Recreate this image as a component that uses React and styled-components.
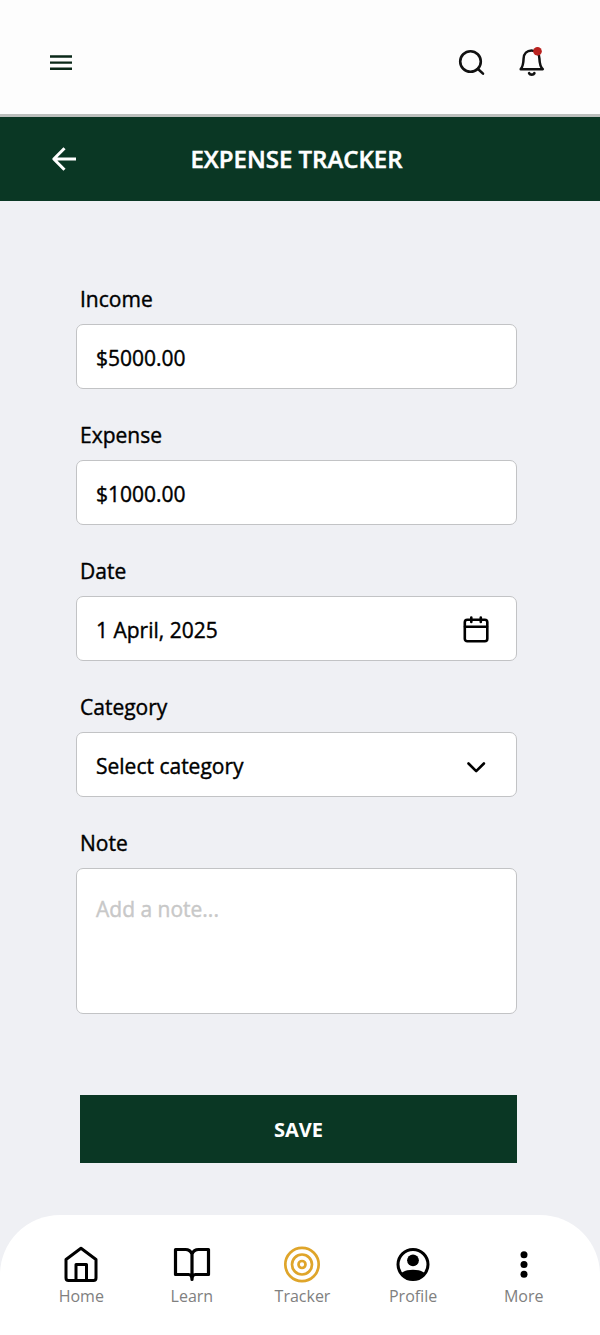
import React, { useState } from "react";
import styled, { createGlobalStyle } from "styled-components";

const App = () => {
  const [income, setIncome] = useState("$5000.00");
  const [expense, setExpense] = useState("$1000.00");
  const [date, setDate] = useState("1 April, 2025");
  const [category, setCategory] = useState("");
  const [note, setNote] = useState("");

  return (
    <Page>
      <GlobalStyle />
      <TopBar>
        <IconButton type="button" aria-label="Menu">
          <MenuIcon />
        </IconButton>
        <TopActions>
          <IconButton type="button" aria-label="Search">
            <SearchIcon />
          </IconButton>
          <IconButton type="button" aria-label="Notifications">
            <BellIcon />
          </IconButton>
        </TopActions>
      </TopBar>
      <TitleBar>
        <IconButton type="button" aria-label="Back">
          <BackIcon />
        </IconButton>
        <Title>EXPENSE TRACKER</Title>
      </TitleBar>
      <Form onSubmit={(e) => e.preventDefault()}>
        <Field>
          <Label htmlFor="income">Income</Label>
          <Control>
            <Input
              id="income"
              type="text"
              value={income}
              onChange={(e) => setIncome(e.target.value)}
            />
          </Control>
        </Field>
        <Field>
          <Label htmlFor="expense">Expense</Label>
          <Control>
            <Input
              id="expense"
              type="text"
              value={expense}
              onChange={(e) => setExpense(e.target.value)}
            />
          </Control>
        </Field>
        <Field>
          <Label htmlFor="date">Date</Label>
          <Control>
            <Input
              id="date"
              type="text"
              value={date}
              onChange={(e) => setDate(e.target.value)}
            />
            <ControlButton type="button" aria-label="Pick a date">
              <CalendarIcon />
            </ControlButton>
          </Control>
        </Field>
        <Field>
          <Label htmlFor="category">Category</Label>
          <Control>
            <Select
              id="category"
              value={category}
              onChange={(e) => setCategory(e.target.value)}
            >
              <option value="">Select category</option>
              <option value="food">Food</option>
              <option value="transport">Transport</option>
              <option value="bills">Bills</option>
            </Select>
            <ControlIcon>
              <ChevronIcon />
            </ControlIcon>
          </Control>
        </Field>
        <Field>
          <Label htmlFor="note">Note</Label>
          <TextArea
            id="note"
            placeholder="Add a note..."
            value={note}
            onChange={(e) => setNote(e.target.value)}
          />
        </Field>
        <SaveButton type="submit">SAVE</SaveButton>
      </Form>
      <BottomNav>
        <NavLink href="#home">
          <HomeIcon />
          Home
        </NavLink>
        <NavLink href="#learn">
          <BookIcon />
          Learn
        </NavLink>
        <NavLink href="#tracker" aria-current="page">
          <TargetIcon />
          Tracker
        </NavLink>
        <NavLink href="#profile">
          <ProfileIcon />
          Profile
        </NavLink>
        <NavLink href="#more">
          <MoreIcon />
          More
        </NavLink>
      </BottomNav>
    </Page>
  );
};

const MenuIcon = () => (
  <svg width="24" height="24" viewBox="0 0 24 24" stroke="#0a2818" strokeWidth="2.4">
    <path d="M1 5.5h22M1 11.6h22M1 17.7h22" />
  </svg>
);

const SearchIcon = () => (
  <svg width="28" height="28" viewBox="0 0 28 28" fill="none" stroke="#111" strokeWidth="2.6" strokeLinecap="round">
    <circle cx="12.5" cy="12.5" r="10.3" />
    <path d="M20 20l5 4.6" />
  </svg>
);

const BellIcon = () => (
  <svg width="28" height="32" viewBox="0 0 28 32" fill="none" stroke="#111" strokeWidth="2.5" strokeLinecap="round" strokeLinejoin="round">
    <path d="M2.7 22.2C5 19.6 5.4 16.5 5.6 11.5C5.8 6.5 9 3.4 13.5 3.4C18 3.4 21.2 6.5 21.4 11.5C21.6 16.500 22 19.6 24.8 22.2Z" />
    <path d="M11.2 26.3c.9 1.7 4.2 1.7 5.1 0" strokeWidth="2.8" />
    <circle cx="19.5" cy="4.300" r="4.3" fill="#b9221f" stroke="none" />
  </svg>
);

const BackIcon = () => (
  <svg width="26" height="26" viewBox="0 0 26 26" fill="none" stroke="#fff" strokeWidth="3" strokeLinejoin="round">
    <path d="M25 13H3M13.5 2.2L2.8 13l10.7 10.8" />
  </svg>
);

const CalendarIcon = () => (
  <svg width="28" height="30" viewBox="0 0 28 30" fill="none" stroke="#000" strokeWidth="2.6" strokeLinecap="round" strokeLinejoin="round">
    <rect x="2.8" y="5.7" width="22.5" height="21.5" rx="2.5" />
    <path d="M3 12.7h22M9.3 3.5v4.500M18.8 3.5v4.500" />
  </svg>
);

const ChevronIcon = () => (
  <svg width="28" height="28" viewBox="0 0 28 28" fill="none" stroke="#000" strokeWidth="2.6" strokeLinecap="round" strokeLinejoin="round">
    <path d="M6.5 10.5l7.7 7.7l7.7-7.7" />
  </svg>
);

const HomeIcon = () => (
  <svg width="40" height="40" viewBox="0 0 40 40" fill="none" stroke="#000" strokeWidth="3" strokeLinejoin="round">
    <path d="M5 15.5L20 4.3l15 11.2V34a2.5 2.5 0 0 1-2.5 2.5H7.5a2.5 2.5 0 0 1-2.5-2.5Z" />
    <path d="M15 36.5V20.5h10.5V36.5" />
  </svg>
);

const BookIcon = () => (
  <svg width="40" height="40" viewBox="0 0 40 40" fill="none" stroke="#000" strokeWidth="3.2" strokeLinejoin="round">
    <path d="M20 10C18.5 6.5 16.5 5.5 13.5 5.5H3.5V30.5H16.5C18.5 30.5 20 31.5 20 35.5C20 31.5 21.5 30.5 23.5 30.5H36.5V5.5H26.5C23.5 5.5 21.5 6.5 20 10V35" />
  </svg>
);

const TargetIcon = () => (
  <svg width="40" height="40" viewBox="0 0 40 40" fill="none" stroke="#dfa52a" strokeWidth="2.7">
    <circle cx="20" cy="20.5" r="16.7" />
    <circle cx="20" cy="20.5" r="10" />
    <circle cx="20" cy="20.5" r="3.5" />
  </svg>
);

const ProfileIcon = () => (
  <svg width="40" height="40" viewBox="0 0 40 40">
    <circle cx="20" cy="20.5" r="15" fill="none" stroke="#000" strokeWidth="3" />
    <circle cx="20" cy="16.3" r="5.9" />
    <path d="M8.5 29C12.5 24.8 27.5 24.8 31.5 29C26.5 38.5 13.5 38.5 8.5 29Z" />
  </svg>
);

const MoreIcon = () => (
  <svg width="40" height="40" viewBox="0 0 40 40">
    <circle cx="20" cy="10.7" r="3.5" />
    <circle cx="20" cy="20.5" r="3.5" />
    <circle cx="20" cy="30.3" r="3.5" />
  </svg>
);

const GlobalStyle = createGlobalStyle`
  * {
    box-sizing: border-box;
  }
  body {
    margin: 0;
    background-color: #eff0f4;
  }
  body, input, select, textarea, button {
    font-family: "Open Sans", sans-serif;
  }
  label, input, select, textarea {
    font-size: 21px;
    font-weight: 400;
    color: #000;
    -webkit-text-stroke: 0.4px;
  }
`;

const Page = styled.div`
  display: flex;
  flex-direction: column;
  min-height: 100vh;
`;

const TopBar = styled.header`
  display: flex;
  align-items: center;
  justify-content: space-between;
  height: 117px;
  padding: 12px 54px 0 49px;
  background-color: #fdfdfd;
  border-bottom: 3px solid #bcbfbd;
`;

const TopActions = styled.div`
  display: flex;
  align-items: center;
  gap: 32px;
`;

const IconButton = styled.button`
  display: flex;
  padding: 0;
  border: none;
  background: transparent;
  cursor: pointer;
`;

const TitleBar = styled.div`
  display: grid;
  grid-template-columns: 26px 1fr 26px;
  align-items: center;
  height: 84px;
  padding: 0 58px 0 51px;
  background-color: #0a3724;
`;

const Title = styled.h1`
  margin: 0;
  text-align: center;
  font-size: 24px;
  line-height: 32px;
  font-weight: 600;
  color: #fff;
  -webkit-text-stroke: 0.5px;
`;

const Form = styled.form`
  display: flex;
  flex-direction: column;
  gap: 32px;
  flex: 1;
  padding: 84px 83px 52px 76px;
`;

const Field = styled.div`
  display: flex;
  flex-direction: column;
  gap: 11px;
`;

const Label = styled.label`
  padding-left: 4px;
  line-height: 28px;
`;

const Control = styled.div`
  display: grid;
  align-items: center;
  height: 65px;
  border: 1px solid #c2c3c5;
  border-radius: 7px;
  background-color: #fff;
  > * {
    grid-area: 1 / 1;
  }
`;

const Input = styled.input`
  width: 100%;
  height: 63px;
  padding: 3px 60px 0 19px;
  border: none;
  border-radius: 7px;
  background: transparent;
`;

const Select = styled.select`
  appearance: none;
  width: 100%;
  height: 63px;
  padding: 3px 60px 0 19px;
  border: none;
  border-radius: 7px;
  background: transparent;
`;

const ControlButton = styled(IconButton)`
  justify-self: end;
  margin-right: 26px;
`;

const ControlIcon = styled.span`
  display: flex;
  justify-self: end;
  margin-right: 26px;
  padding-top: 4px;
  pointer-events: none;
`;

const TextArea = styled.textarea`
  display: block;
  height: 146px;
  padding: 26px 19px;
  border: 1px solid #c2c3c5;
  border-radius: 7px;
  background-color: #fff;
  resize: none;
  line-height: 28px;
  &::placeholder {
    color: #c8c8c8;
  }
`;

const SaveButton = styled.button`
  height: 68px;
  margin: 49px 0 0 4px;
  border: none;
  background-color: #0a3724;
  font-size: 20px;
  font-weight: 700;
  color: #fff;
  cursor: pointer;
`;

const BottomNav = styled.nav`
  display: grid;
  grid-template-columns: repeat(5, 1fr);
  height: 120px;
  padding: 29px 21px 0 26px;
  border-radius: 60px 60px 0 0;
  background-color: #fff;
`;

const NavLink = styled.a`
  display: flex;
  flex-direction: column;
  align-items: center;
  font-size: 16px;
  line-height: 24px;
  color: #808080;
  text-decoration: none;
`;

export default App;
